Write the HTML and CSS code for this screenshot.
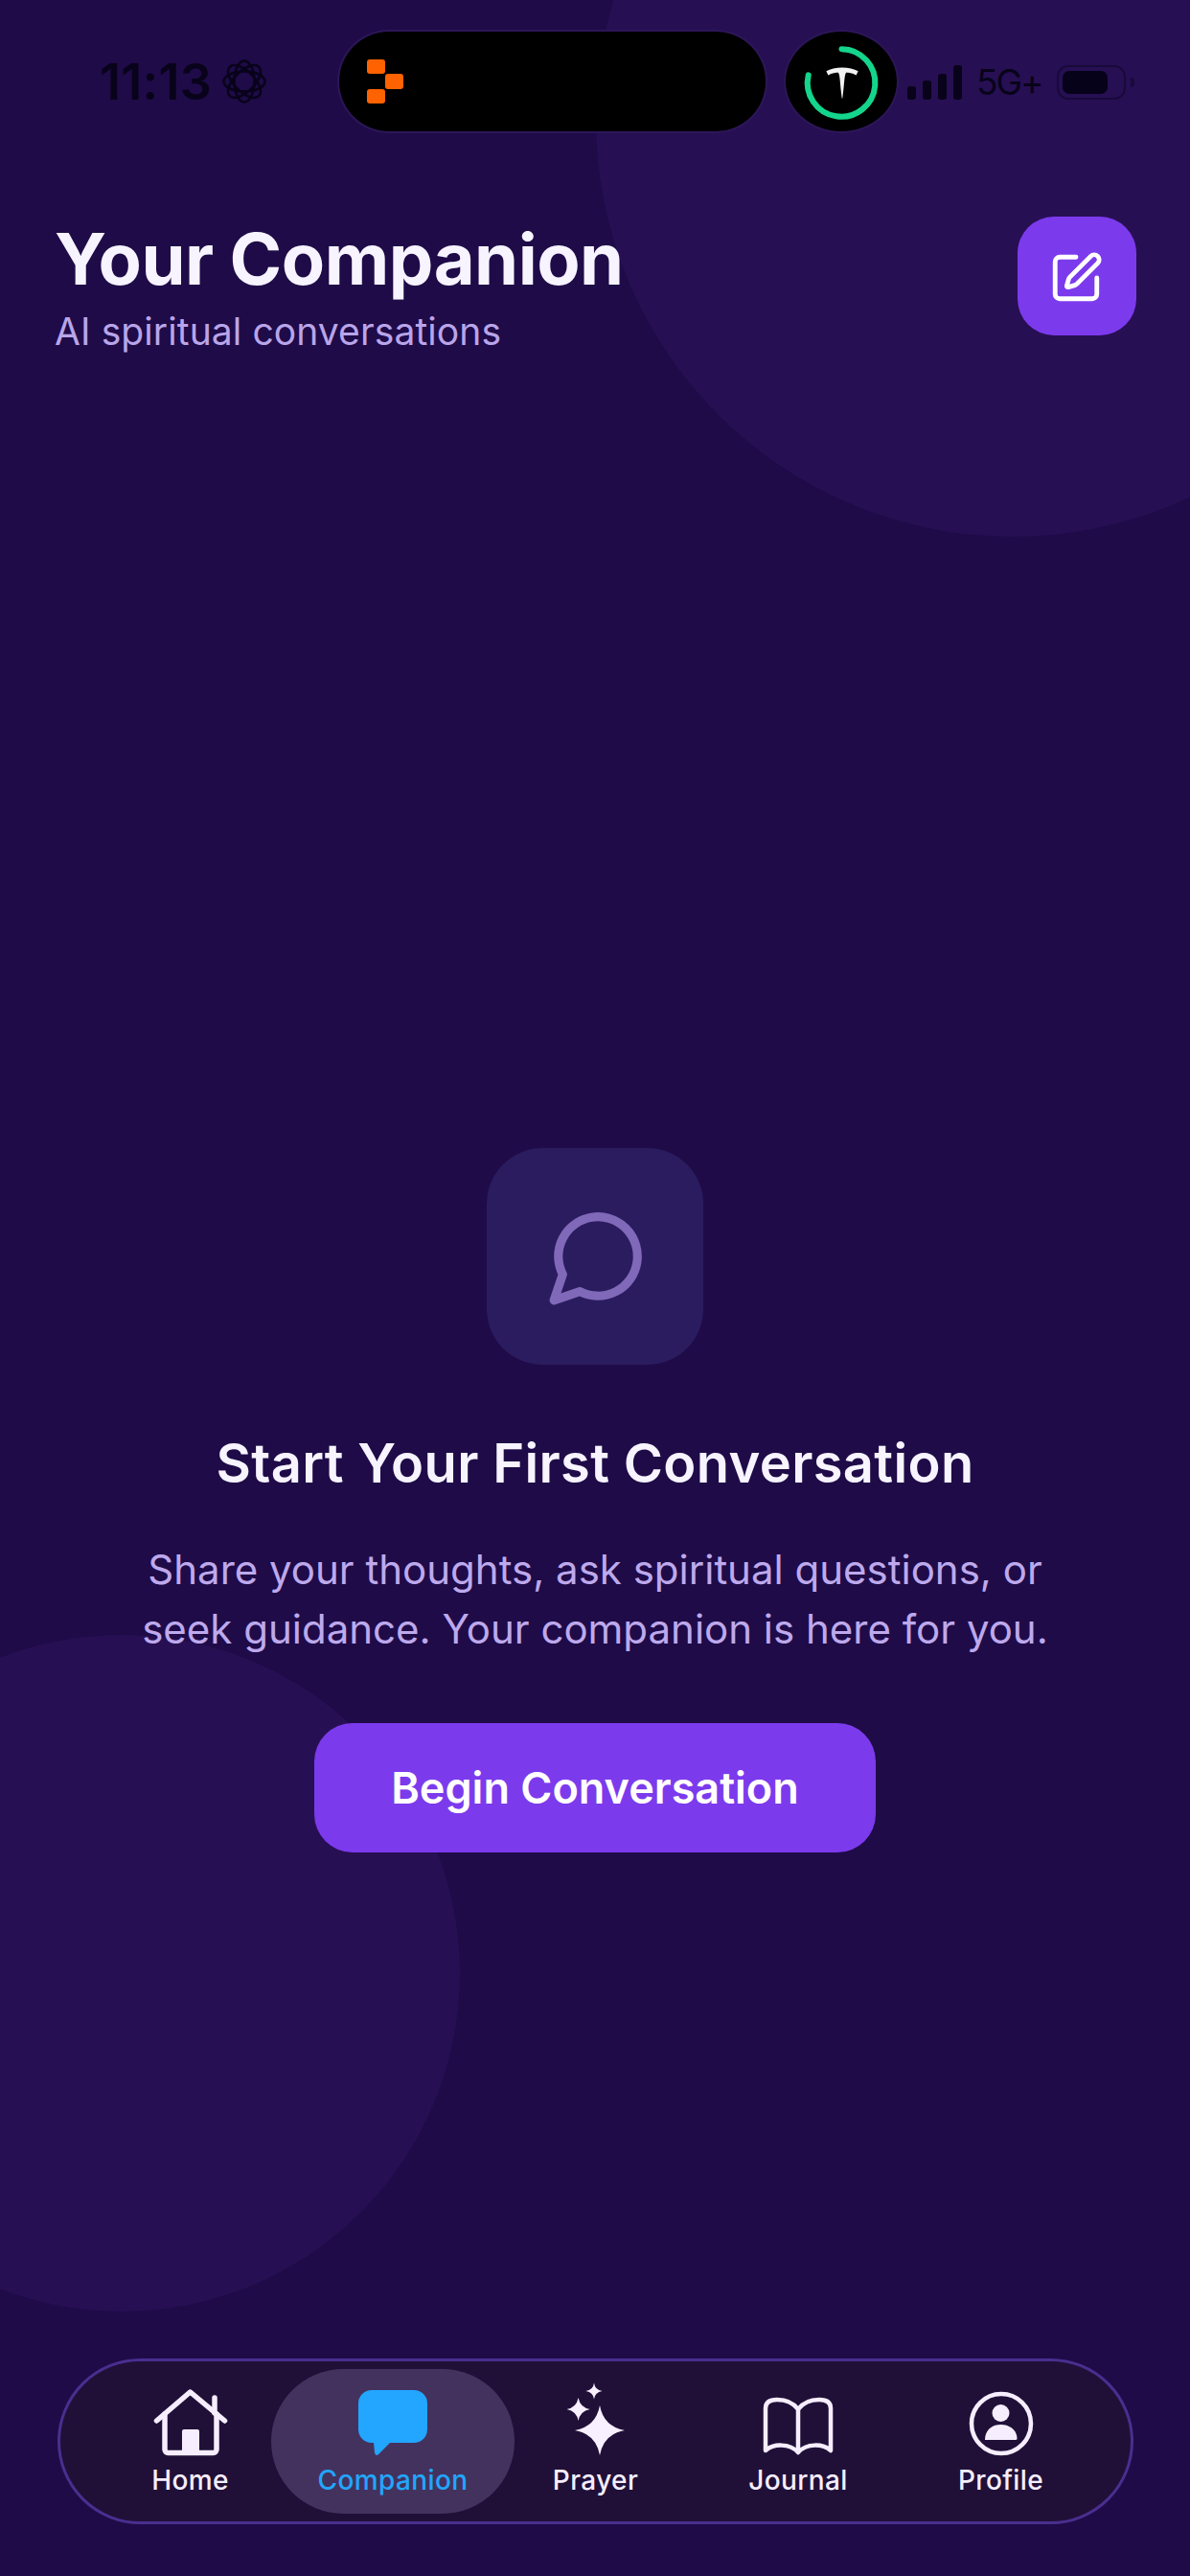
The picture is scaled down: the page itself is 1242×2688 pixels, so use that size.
FILE: index.html
```html
<!DOCTYPE html>
<html lang="en">
<head>
    <meta http-equiv="Content-Type" content="text/html; charset=UTF-8">
    <meta name="viewport" content="width=device-width, initial-scale=1.0">
    <title>Your Companion</title>
    <link rel="stylesheet" href="styles.css">
</head>
<body>
    <div class="screen">
        <!-- Background circles -->
        <div class="blob blob-top"></div>
        <div class="blob blob-bottom"></div>

        <!-- Status bar -->
        <div class="status-bar">
            <span class="time">11:13</span>
            <svg class="focus-icon" viewBox="0 0 46 46" fill="none" stroke="#08031a" stroke-width="2.600">
                <ellipse cx="23" cy="23" rx="21.500" ry="10.500"/>
                <ellipse cx="23" cy="23" rx="21.500" ry="10.500" transform="rotate(45 23 23)"/>
                <ellipse cx="23" cy="23" rx="21.500" ry="10.500" transform="rotate(90 23 23)"/>
                <ellipse cx="23" cy="23" rx="21.500" ry="10.500" transform="rotate(135 23 23)"/>
            </svg>
            <div class="island">
                <div class="island-logo">
                    <span class="logo-cell"></span>
                    <span class="logo-cell logo-cell-mid"></span>
                    <span class="logo-cell"></span>
                </div>
            </div>
            <div class="island-dot">
                <svg viewBox="0 0 115 104" fill="none">
                    <path d="M58 18A35 35 0 1 1 23.500 45" stroke="#14d58c" stroke-width="6" stroke-linecap="round"/>
                    <path d="M42 41C50 36 67 36 75 41L73 45C69 43 65 42.500 62.500 42.500C60.500 46 61 53 58.800 69H58.200C56 53 56.500 46 54.500 42.500C52 42.500 48 43 44 45Z" fill="#f2f2f2"/>
                </svg>
            </div>
            <div class="signal">
                <span class="bar bar-1"></span>
                <span class="bar bar-2"></span>
                <span class="bar bar-3"></span>
                <span class="bar bar-4"></span>
            </div>
            <span class="network">5G+</span>
            <div class="battery">
                <div class="battery-fill"></div>
            </div>
            <div class="battery-nub"></div>
        </div>

        <!-- Header -->
        <div class="header">
            <div class="header-text">
                <h1 class="title">Your Companion</h1>
                <p class="subtitle">AI spiritual conversations</p>
            </div>
            <div class="edit-button">
                <svg class="edit-icon" width="58" height="58" viewBox="0 0 24 24" fill="none" stroke="#fff" stroke-width="2" stroke-linecap="round" stroke-linejoin="round">
                    <path d="M12 3H5a2 2 0 0 0-2 2v14a2 2 0 0 0 2 2h14a2 2 0 0 0 2-2v-7"/>
                    <path d="M18.375 2.625a1 1 0 0 1 3 3l-9.013 9.014a2 2 0 0 1-.853.505l-2.873.84a.5.5 0 0 1-.62-.62l.84-2.873a2 2 0 0 1 .506-.852z"/>
                </svg>
            </div>
        </div>

        <!-- Empty state -->
        <div class="empty-state">
            <div class="empty-icon">
                <svg class="chat-icon" width="110" height="110" viewBox="0 0 24 24" fill="none" stroke="#8069b9" stroke-width="2" stroke-linecap="round" stroke-linejoin="round">
                    <path d="M7.900 20A9 9 0 1 0 4 16.100L2 22Z"/>
                </svg>
            </div>
            <h2 class="empty-title">Start Your First Conversation</h2>
            <p class="empty-text">Share your thoughts, ask spiritual questions, or seek guidance. Your companion is here for you.</p>
            <div class="begin-button">Begin Conversation</div>
        </div>

        <!-- Bottom navigation -->
        <div class="nav">
            <div class="nav-item">
                <div class="nav-icon">
                    <svg width="78" height="70" viewBox="0 0 78 70" fill="none" stroke="#f6eeff" stroke-width="5.500" stroke-linecap="round" stroke-linejoin="round">
                        <path d="M3.500 33L38.500 3L74.500 33"/>
                        <path d="M12 26V63a3.500 3.500 0 0 0 3.500 3.500H62.500a3.500 3.500 0 0 0 3.500-3.500V26"/>
                        <path d="M64 9V25"/>
                        <rect x="30" y="42" width="18" height="24" rx="2" fill="#f6eeff" stroke="none"/>
                    </svg>
                </div>
                <span class="nav-label">Home</span>
            </div>
            <div class="nav-item nav-item-active">
                <div class="nav-icon">
                    <svg width="72" height="69" viewBox="0 0 72 69" fill="#22a6ff">
                        <path d="M14 0H58A14 14 0 0 1 72 14V41A14 14 0 0 1 58 55H33L21 67Q17.500 69.500 17 65L16 55H14A14 14 0 0 1 0 41V14A14 14 0 0 1 14 0Z"/>
                    </svg>
                </div>
                <span class="nav-label">Companion</span>
            </div>
            <div class="nav-item">
                <div class="nav-icon">
                    <svg width="62" height="78" viewBox="0 0 62 78" fill="#f8f0ff">
                        <path d="M35 25Q39 47 61 51Q39 55 35 77Q31 55 9 51Q31 47 35 25Z"/>
                        <path d="M12.600 17Q14.500 27 24.600 29Q14.500 31 12.600 41Q10.700 31 0.600 29Q10.700 27 12.600 17Z"/>
                        <path d="M29 1.500Q30 9 37.500 10Q30 11 29 18.500Q28 11 20.500 10Q28 9 29 1.500Z"/>
                    </svg>
                </div>
                <span class="nav-label">Prayer</span>
            </div>
            <div class="nav-item">
                <div class="nav-icon">
                    <svg width="74" height="62" viewBox="0 0 74 62" fill="none" stroke="#f6eeff" stroke-width="4.500" stroke-linecap="round" stroke-linejoin="round">
                        <path d="M37 13C31 5 22 3 15 3C7 3 3 6 3 12V56C11 49 28 48 37 58C46 48 63 49 71 56V12C71 6 67 3 59 3C52 3 43 5 37 13Z"/>
                        <path d="M37 13V57"/>
                    </svg>
                </div>
                <span class="nav-label">Journal</span>
            </div>
            <div class="nav-item">
                <div class="nav-icon">
                    <svg width="68" height="68" viewBox="0 0 68 68" fill="#f6eeff">
                        <circle cx="34" cy="34" r="31" fill="none" stroke="#f6eeff" stroke-width="4.500"/>
                        <circle cx="33.500" cy="23" r="9"/>
                        <path d="M17 51C17 41 24 35 33.500 35C43 35 50.500 41 50.500 49.500Q50.500 51 49 51Z"/>
                    </svg>
                </div>
                <span class="nav-label">Profile</span>
            </div>
        </div>
    </div>
</body>
</html>
```

FILE: styles.css
```css
body {
    background-color: #1f0b48;
    font-family: 'Inter', 'Noto Sans', sans-serif;
    margin: 0;
}
h1, h2, p {
    margin: 0;
    font-weight: normal;
}
.screen {
    position: relative;
    width: 1242px;
    height: 2688px;
    overflow: hidden;
    display: flex;
    flex-direction: column;
    background-color: #1f0b48;
}
.blob {
    position: absolute;
    border-radius: 50%;
    background-color: #270f53;
}
.blob-top {
    left: 622px;
    top: -310px;
    width: 870px;
    height: 870px;
}
.blob-bottom {
    left: -226px;
    top: 1706px;
    width: 706px;
    height: 706px;
}

/* Status bar */
.status-bar {
    position: relative;
    display: flex;
    align-items: center;
    height: 104px;
    margin-top: 33px;
    padding-left: 104px;
    color: #08031a;
}
.time {
    width: 114px;
    font-size: 52px;
    font-weight: 600;
    letter-spacing: 0.300px;
    white-space: nowrap;
}
.focus-icon {
    width: 46px;
    height: 46px;
    margin-left: 14px;
}
.island {
    display: flex;
    align-items: center;
    width: 445px;
    height: 104px;
    margin-left: 76px;
    padding-left: 29px;
    box-sizing: border-box;
    border-radius: 52px;
    background-color: #000;
    box-shadow: 0 0 0 2px #2c1658;
}
.island-logo {
    display: flex;
    flex-direction: column;
    width: 38px;
}
.logo-cell {
    width: 19px;
    height: 15.500px;
    border-radius: 3px;
    background-color: #ff6200;
}
.logo-cell-mid {
    margin-left: 19px;
}
.island-dot {
    width: 116px;
    height: 104px;
    margin-left: 21px;
    border-radius: 50%;
    background-color: #000;
    box-shadow: 0 0 0 2px #2c1658;
}
.island-dot svg {
    display: block;
}
.signal {
    display: flex;
    align-items: flex-end;
    gap: 7px;
    height: 36px;
    margin-left: 11px;
    margin-top: 2px;
}
.bar {
    width: 9px;
    border-radius: 3px;
    background-color: #08031a;
}
.bar-1 { height: 14px; }
.bar-2 { height: 20px; }
.bar-3 { height: 27px; }
.bar-4 { height: 36px; }
.network {
    width: 65px;
    margin-left: 15px;
    font-size: 37px;
    letter-spacing: -2px;
    white-space: nowrap;
}
.battery {
    width: 72px;
    height: 36px;
    margin-left: 19px;
    margin-top: 2px;
    padding: 4px;
    box-sizing: border-box;
    border: 2px solid #180a3a;
    border-radius: 12px;
}
.battery-fill {
    width: 47px;
    height: 24px;
    border-radius: 7px;
    background-color: #06021a;
}
.battery-nub {
    width: 4px;
    height: 10px;
    margin-left: 5px;
    margin-top: 2px;
    border-radius: 0 4px 4px 0;
    background-color: #180a3a;
}

/* Header */
.header {
    position: relative;
    display: flex;
    justify-content: space-between;
    align-items: flex-start;
    margin-top: 89px;
    padding: 0 56px 0 57px;
}
.header-text {
    padding-top: 2px;
}
.title {
    font-size: 74px;
    line-height: 84px;
    font-weight: 700;
    letter-spacing: -0.500px;
    color: #f7f4ff;
}
.subtitle {
    margin-top: 10px;
    font-size: 39px;
    line-height: 48px;
    letter-spacing: 0.100px;
    color: #b9a5e9;
}
.edit-button {
    display: flex;
    align-items: center;
    justify-content: center;
    width: 124px;
    height: 124px;
    border-radius: 38px;
    background-color: #7c3aed;
}
.edit-icon {
    margin: 3px 3px 0 0;
}

/* Empty state */
.empty-state {
    position: relative;
    display: flex;
    flex-direction: column;
    align-items: center;
    padding-top: 828px;
}
.empty-icon {
    display: flex;
    align-items: center;
    justify-content: center;
    width: 226px;
    height: 226px;
    border-radius: 58px;
    background-color: #2a1c5f;
}
.chat-icon {
    margin-left: 5px;
}
.empty-title {
    margin-top: 69px;
    font-size: 56px;
    line-height: 68px;
    font-weight: 600;
    letter-spacing: 0.350px;
    color: #f7f4ff;
}
.empty-text {
    max-width: 960px;
    margin-top: 46px;
    font-size: 42px;
    line-height: 62px;
    text-align: center;
    color: #bda9ec;
}
.begin-button {
    display: flex;
    align-items: center;
    justify-content: center;
    width: 586px;
    height: 135px;
    margin-top: 67px;
    border-radius: 40px;
    background-color: #7c3aed;
    font-size: 45px;
    font-weight: 600;
    color: #fff;
}

/* Bottom navigation */
.nav {
    position: relative;
    display: flex;
    justify-content: center;
    align-items: stretch;
    height: 173px;
    margin: auto 59px 54px 60px;
    padding: 8px 0;
    box-sizing: border-box;
    border: 3px solid #4a2e8f;
    border-radius: 87px;
    background-color: #201038;
}
.nav-item {
    display: flex;
    flex-direction: column;
    align-items: center;
    width: 211.500px;
    padding-top: 15px;
    box-sizing: border-box;
    color: #f6eeff;
}
.nav-item-active {
    width: 254px;
    margin: 0 -21.250px;
    border-radius: 76px;
    background-color: #44325e;
    color: #22a6ff;
}
.nav-icon {
    display: flex;
    align-items: flex-end;
    justify-content: center;
    height: 76px;
}
.nav-icon svg {
    display: block;
}
.nav-label {
    margin-top: 8px;
    font-size: 28px;
    line-height: 34px;
    font-weight: 500;
    letter-spacing: 0.400px;
}
```
